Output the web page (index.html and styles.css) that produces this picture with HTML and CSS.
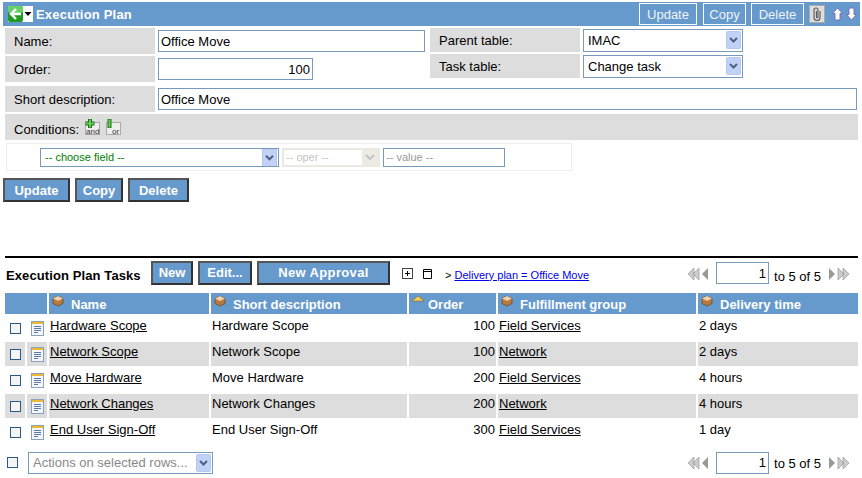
FILE: index.html
```html
<!DOCTYPE html>
<html lang="en">
<head>
  <meta charset="UTF-8">
  <title>Execution Plan</title>
  <link rel="stylesheet" href="styles.css">
</head>
<body>
  <div class="bar">
    <span class="back">
      <svg width="15" height="16" viewBox="0 0 15 16"><rect width="15" height="16" rx="2" fill="#1f9c1f"/><rect width="15" height="7" rx="2" fill="#66d266"/><path d="M8 3 3 8l5 5M3.500 8H13" fill="none" stroke="#fff" stroke-width="2.400"/></svg>
      <svg width="10" height="16" viewBox="0 0 10 16"><path d="M1.500 6h7L5 10z" fill="#000"/></svg>
    </span>
    <span class="bar-title">Execution Plan</span>
    <span class="bar-tools">
      <button class="bar-btn update-top">Update</button>
      <button class="bar-btn copy-top">Copy</button>
      <button class="bar-btn delete-top">Delete</button>
      <span class="clip">
        <svg width="14" height="16" viewBox="0 0 14 16"><path d="M10 5v6.500a3 3 0 0 1-6 0V4a2 2 0 0 1 4 0v7a.8.8 0 0 1-1.600 0V5" fill="none" stroke="#555" stroke-width="1.100"/></svg>
      </span>
      <svg class="arrow-up" width="11" height="14" viewBox="0 0 11 14"><path d="M5.500 1 10.500 6.500H8V13H3V6.500H.5z" fill="#fff" stroke="#7a6fc8"/></svg>
      <svg class="arrow-down" width="11" height="14" viewBox="0 0 11 14"><path d="M5.500 13 10.500 7.500H8V1H3v6.500H.5z" fill="#fff" stroke="#7a6fc8"/></svg>
    </span>
  </div>

  <div class="form-top">
    <div class="form-col">
      <div class="form-row">
        <label class="lbl">Name:</label>
        <input class="txt name-input" value="Office Move">
      </div>
      <div class="form-row">
        <label class="lbl">Order:</label>
        <input class="txt order-input" value="100">
      </div>
    </div>
    <div class="form-col right-col">
      <div class="form-row short-row">
        <label class="lbl">Parent table:</label>
        <select class="sel table-sel"><option>IMAC</option></select>
      </div>
      <div class="form-row short-row">
        <label class="lbl">Task table:</label>
        <select class="sel table-sel"><option>Change task</option></select>
      </div>
    </div>
  </div>

  <div class="form-row desc-row">
    <label class="lbl">Short description:</label>
    <input class="txt desc-input" value="Office Move">
  </div>

  <div class="cond-row">
    <span class="cond-label">Conditions:</span>
    <svg class="cond-icon" width="15" height="16" viewBox="0 0 15 16"><rect x=".5" y="3.500" width="14" height="12" fill="#eee" stroke="#aaa"/><path d="M5 0v9M.5 4.500h9" stroke="#1f6a1f" stroke-width="4"/><path d="M5 .5v8M1 4.500h8" stroke="#5fd04f" stroke-width="2"/><text x="1" y="14.500" class="cond-word">and</text></svg>
    <svg class="cond-icon" width="15" height="16" viewBox="0 0 15 16"><rect x=".5" y="3.500" width="14" height="12" fill="#eee" stroke="#aaa"/><path d="M3.500 0v9" stroke="#1f6a1f" stroke-width="4"/><path d="M3.500 .5v8" stroke="#5fd04f" stroke-width="2"/><text x="6" y="14.500" class="cond-word">or</text></svg>
  </div>

  <div class="filter">
    <select class="sel field-sel"><option>-- choose field --</option></select>
    <select class="sel oper-sel" disabled><option>-- oper --</option></select>
    <input class="txt value-input" value="-- value --">
  </div>

  <div class="actions">
    <button class="btn update-btn">Update</button>
    <button class="btn copy-btn">Copy</button>
    <button class="btn delete-btn">Delete</button>
  </div>

  <div class="list-head">
    <span class="list-title">Execution Plan Tasks</span>
    <button class="btn new-btn">New</button>
    <button class="btn edit-btn">Edit...</button>
    <button class="btn approval-btn">New Approval</button>
    <svg class="tree-icon" width="11" height="11" viewBox="0 0 11 11"><rect x=".5" y=".5" width="10" height="10" fill="#fff" stroke="#444"/><path d="M3 5.500h5M5.500 3v5" stroke="#000"/></svg>
    <svg class="cal-icon" width="9" height="10" viewBox="0 0 9 10"><path d="M.5.500h8v9h-8zM.5 2.500h8" fill="#fff" stroke="#000"/></svg>
    <span class="crumb">&gt; <a href="#">Delivery plan = Office Move</a></span>
    <span class="pager">
      <svg class="page-first" width="22" height="14" viewBox="0 0 22 14"><path d="M7 1 1 7l6 6zM12 1 6 7l6 6z" fill="#ccc" stroke="#999" stroke-width=".7"/><path d="M21 1l-6 6 6 6z" fill="#999"/></svg>
      <input class="txt page-input" value="1">
      <span class="page-text">to 5 of 5</span>
      <svg width="22" height="14" viewBox="0 0 22 14"><path d="M1 1l6 6-6 6z" fill="#999"/><path d="M10 1l6 6-6 6zM15 1l6 6-6 6z" fill="#ccc" stroke="#999" stroke-width=".7"/></svg>
    </span>
  </div>

  <table class="tasks">
    <colgroup>
      <col class="c-check"><col class="c-doc"><col class="c-name"><col class="c-desc"><col class="c-order"><col class="c-group"><col class="c-time">
    </colgroup>
    <thead>
      <tr>
        <th colspan="2"></th>
        <th><svg class="cube" width="12" height="12" viewBox="0 0 12 12"><path d="M6 1l5 2.500v5L6 11 1 8.500v-5z" fill="#b9793c" stroke="#5e4526" stroke-width=".7"/><path d="M1 3.500 6 6l5-2.500L6 1z" fill="#f0d0a8"/></svg>Name</th>
        <th><svg class="cube" width="12" height="12" viewBox="0 0 12 12"><path d="M6 1l5 2.500v5L6 11 1 8.500v-5z" fill="#b9793c" stroke="#5e4526" stroke-width=".7"/><path d="M1 3.500 6 6l5-2.500L6 1z" fill="#f0d0a8"/></svg>Short description</th>
        <th><svg class="cube sort" width="14" height="12" viewBox="0 0 14 12"><path d="M7 1l6 5H1z" fill="#f3cf5a" stroke="#8a6a20" stroke-width=".6"/></svg>Order</th>
        <th><svg class="cube" width="12" height="12" viewBox="0 0 12 12"><path d="M6 1l5 2.500v5L6 11 1 8.500v-5z" fill="#b9793c" stroke="#5e4526" stroke-width=".7"/><path d="M1 3.500 6 6l5-2.500L6 1z" fill="#f0d0a8"/></svg>Fulfillment group</th>
        <th><svg class="cube" width="12" height="12" viewBox="0 0 12 12"><path d="M6 1l5 2.500v5L6 11 1 8.500v-5z" fill="#b9793c" stroke="#5e4526" stroke-width=".7"/><path d="M1 3.500 6 6l5-2.500L6 1z" fill="#f0d0a8"/></svg>Delivery time</th>
      </tr>
    </thead>
    <tbody id="rows"></tbody>
  </table>

  <div class="list-foot">
    <span class="check foot-check"></span>
    <select class="sel actions-sel"><option>Actions on selected rows...</option></select>
    <span class="pager">
      <svg class="page-first" width="22" height="14" viewBox="0 0 22 14"><path d="M7 1 1 7l6 6zM12 1 6 7l6 6z" fill="#ccc" stroke="#999" stroke-width=".7"/><path d="M21 1l-6 6 6 6z" fill="#999"/></svg>
      <input class="txt page-input" value="1">
      <span class="page-text">to 5 of 5</span>
      <svg width="22" height="14" viewBox="0 0 22 14"><path d="M1 1l6 6-6 6z" fill="#999"/><path d="M10 1l6 6-6 6zM15 1l6 6-6 6z" fill="#ccc" stroke="#999" stroke-width=".7"/></svg>
    </span>
  </div>

  <script src="rows.js"></script>
</body>
</html>
```

FILE: rows.js
```js
const tasks = [
  ["Hardware Scope", "100", "Field Services", "2 days"],
  ["Network Scope", "100", "Network", "2 days"],
  ["Move Hardware", "200", "Field Services", "4 hours"],
  ["Network Changes", "200", "Network", "4 hours"],
  ["End User Sign-Off", "300", "Field Services", "1 day"]
];

const docIcon = '<svg width="13" height="15" viewBox="0 0 13 15"><rect x=".5" y=".5" width="12" height="14" fill="#f4f6fb" stroke="#8aa0c0"/><rect x="1" y="1" width="11" height="2" fill="#eeb92e"/><path d="M3 5.500h7M3 7.500h7M3 9.500h7M3 11.500h4" stroke="#5a7aa8"/></svg>';

document.getElementById("rows").innerHTML = tasks.map(function (t) {
  return '<tr>' +
    '<td class="cell-check"><span class="check"></span></td>' +
    '<td class="cell-doc">' + docIcon + '</td>' +
    '<td><a href="#">' + t[0] + '</a></td>' +
    '<td>' + t[0] + '</td>' +
    '<td class="num">' + t[1] + '</td>' +
    '<td><a href="#">' + t[2] + '</a></td>' +
    '<td>' + t[3] + '</td>' +
    '</tr>';
}).join("");
```

FILE: styles.css
```css
body {
  margin: 0;
  padding: 2px 0 0 3px;
  font-family: "Liberation Sans", Arial, sans-serif;
  font-size: 13px;
  color: #000;
  background: #fff;
  overflow: hidden;
}
.bar {
  display: flex;
  align-items: center;
  height: 24px;
  background: #6699cc;
  padding-left: 5px;
  width: 852px;
}
.back {
  display: flex;
  align-items: center;
  background: #fff;
  margin-right: 3px;
  height: 16px;
}
.bar-title {
  color: #fff;
  font-weight: bold;
  letter-spacing: .2px;
}
.bar-tools {
  margin-left: auto;
  display: flex;
  align-items: center;
}
.bar-btn {
  height: 22px;
  margin-right: 5px;
  padding: 0;
  background: #6699cc;
  border: 1px solid #fff;
  color: #f0f4fa;
  font: 13px "Liberation Sans", Arial, sans-serif;
}
.update-top { width: 58px; margin-right: 6px; }
.copy-top { width: 43px; }
.delete-top { width: 53px; }
.clip {
  box-sizing: border-box;
  display: flex;
  justify-content: center;
  width: 16px;
  height: 18px;
  background: #ddd;
  border: 1px solid #aaa;
  margin-right: 7px;
}
.arrow-up { margin-right: 3px; }
.arrow-down { margin-right: 3px; }

.form-top {
  display: flex;
  margin-top: 2px;
  margin-left: 2px;
}
.form-col { width: 425px; }
.form-row {
  display: flex;
  align-items: center;
  height: 26px;
  margin-bottom: 2px;
}
.lbl {
  background: #dddddd;
  width: 141px;
  padding-left: 9px;
  height: 100%;
  display: flex;
  align-items: center;
  margin-right: 3px;
}
.short-row { height: 24px; }
.txt {
  box-sizing: border-box;
  border: 1px solid #7799bb;
  background: #fff;
  font: 13px "Liberation Sans", Arial, sans-serif;
  padding: 0 2px;
  color: #000;
}
.sel {
  box-sizing: border-box;
  appearance: none;
  border: 1px solid #7799bb;
  border-radius: 0;
  font: 13px "Liberation Sans", Arial, sans-serif;
  padding: 0 2px;
  color: #000;
  background: #fff url("data:image/svg+xml,%3Csvg xmlns='http://www.w3.org/2000/svg' width='15' height='18'%3E%3Crect x='.5' y='.5' width='14' height='17' rx='1' fill='%23c1d2f6' stroke='%23b5c7ee'/%3E%3Cpath d='M4 7l3.500 3.500L11 7' fill='none' stroke='%234d6185' stroke-width='2'/%3E%3C/svg%3E") no-repeat right 1px center;
}
.name-input { width: 267px; height: 22px; }
.order-input { width: 155px; height: 22px; text-align: right; }
.table-sel { width: 160px; height: 23px; padding-left: 4px; }
.desc-row { margin-left: 2px; margin-top: 2px; }
.desc-input { width: 699px; height: 22px; }
.cond-row {
  display: flex;
  align-items: center;
  margin-left: 2px;
  width: 844px;
  height: 26px;
  padding-left: 9px;
  background: #dddddd;
}
.cond-label { padding-top: 4px; }
.cond-icon { margin-left: 6px; }
.cond-word { font: 8px "Liberation Sans", Arial, sans-serif; fill: #333; }
.filter {
  display: flex;
  align-items: center;
  box-sizing: border-box;
  width: 566px;
  height: 28px;
  margin: 3px 0 0 3px;
  padding-left: 33px;
  border: 1px solid #eeeeee;
}
.field-sel {
  width: 239px;
  height: 19px;
  font-size: 11px;
  color: #008000;
  padding-left: 4px;
  margin-right: 3px;
}
.oper-sel {
  width: 98px;
  height: 19px;
  font-size: 11px;
  color: #aaa;
  padding-left: 2px;
  border: 2px solid #e2e0d6;
  margin-right: 3px;
  background: #fff url("data:image/svg+xml,%3Csvg xmlns='http://www.w3.org/2000/svg' width='16' height='15'%3E%3Crect width='16' height='15' fill='%23e6e4da'/%3E%3Cpath d='M4 5l4 4 4-4' fill='none' stroke='%23aaa' stroke-width='2'/%3E%3C/svg%3E") no-repeat right center;
}
.value-input {
  width: 122px;
  height: 19px;
  font-size: 11px;
  color: #999;
}
.actions {
  display: flex;
  gap: 5px;
  margin-top: 7px;
}
.btn {
  box-sizing: border-box;
  height: 24px;
  padding: 0;
  background: #6699cc;
  border: 2px solid #444;
  border-color: #555 #333 #333 #555;
  color: #fff;
  font: bold 13px "Liberation Sans", Arial, sans-serif;
}
.update-btn { width: 67px; }
.copy-btn { width: 48px; }
.delete-btn { width: 61px; }

.list-head {
  display: flex;
  align-items: center;
  box-sizing: border-box;
  width: 853px;
  height: 37px;
  margin: 54px 0 0 2px;
  padding-left: 1px;
  border-top: 2px solid #000;
}
.list-title { font-weight: bold; letter-spacing: .1px; width: 145px; }
.list-head .btn { margin-bottom: 5px; padding-bottom: 2px; }
.new-btn { width: 42px; margin-right: 5px; }
.edit-btn { width: 54px; margin-right: 5px; }
.approval-btn { width: 133px; margin-right: 12px; letter-spacing: .35px; }
.tree-icon { margin: 0 10px 4px 0; }
.cal-icon { margin: 0 13px 4px 0; }
.crumb { font-size: 11px; margin-bottom: 2px; }
.crumb a { color: #0000ee; }
.pager {
  margin-left: auto;
  display: flex;
  align-items: center;
  gap: 5px;
  padding-right: 8px;
}
.page-first { margin-right: 2px; }
.list-head .pager svg { margin-bottom: 3px; }
.list-head .page-input { margin-bottom: 5px; }
.page-text { margin-right: 2px; padding-top: 2px; }
.page-input {
  width: 53px;
  height: 22px;
  text-align: right;
}

.tasks {
  border-collapse: separate;
  border-spacing: 2px;
  table-layout: fixed;
  width: 857px;
  margin-top: -2px;
  margin-left: 0;
}
.c-check, .c-doc { width: 20px; }
.c-name { width: 160px; }
.c-desc { width: 196px; }
.c-order { width: 87px; }
.c-group { width: 198px; }
.c-time { width: 160px; }
.tasks th {
  background: #6699cc;
  color: #fff;
  height: 21px;
  padding: 0 0 0 3px;
  text-align: left;
  white-space: nowrap;
}
.cube { margin-right: 7px; vertical-align: 2px; }
.sort { margin-right: 3px; margin-left: -1px; }
.tasks td {
  box-sizing: border-box;
  height: 24px;
  padding: 0 1px;
  vertical-align: top;
  line-height: 19px;
}
.tasks tr:nth-child(even) td { background: #dddddd; }
.tasks a { color: #000; }
.tasks .num { text-align: right; padding-right: 1px; }
.tasks .cell-doc { padding: 5px 0 0 4px; line-height: 0; }
.tasks .cell-doc svg { display: block; }
.tasks .cell-check { padding: 7px 0 0 5px; line-height: 0; }
.check {
  display: block;
  box-sizing: border-box;
  width: 11px;
  height: 11px;
  border: 1.500px solid #2a5a8a;
  background: #f4f4f4;
}
.list-foot {
  display: flex;
  align-items: center;
  width: 855px;
  height: 23px;
  margin-top: 5px;
}
.foot-check { margin: 0 10px 0 4px; }
.actions-sel {
  width: 185px;
  height: 22px;
  color: #888;
  padding-left: 4px;
}
```
